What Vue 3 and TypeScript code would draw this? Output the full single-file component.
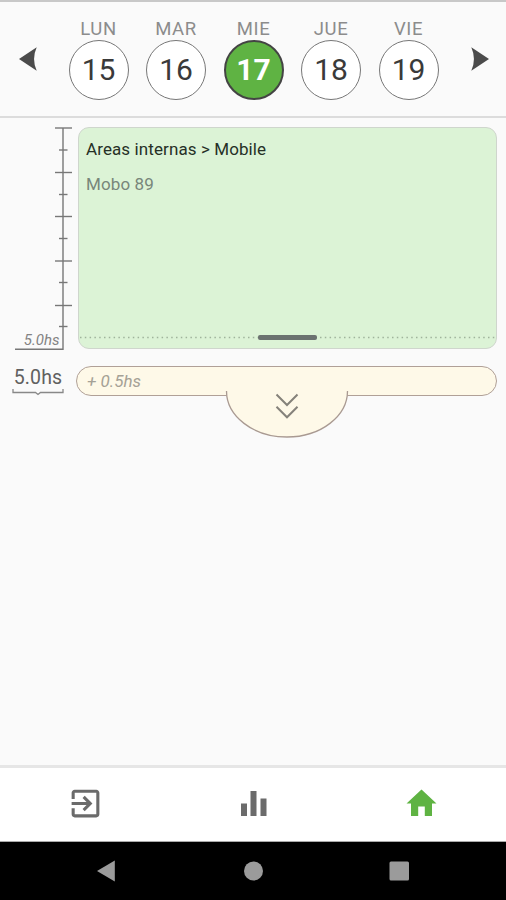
<script setup lang="ts">
import { ref } from 'vue'

interface Day {
  name: string
  date: number
}

const days: Day[] = [
  { name: 'LUN', date: 15 },
  { name: 'MAR', date: 16 },
  { name: 'MIE', date: 17 },
  { name: 'JUE', date: 18 },
  { name: 'VIE', date: 19 },
]
const selected = ref(17)
const majorTicks = [0.5, 45, 89, 133.5, 178]
const minorTicks = [22.5, 67, 111, 155, 199]
</script>

<template>
  <div class="screen">
    <header class="week">
      <button class="arrow" aria-label="Anterior">
        <svg width="20" height="26" viewBox="0 0 20 26"><path d="M1 13L18.700 1.200Q13.400 13 18.700 24.800Z" fill="#4b4b4b" /></svg>
      </button>
      <div class="days">
        <button
          v-for="day in days"
          :key="day.date"
          class="day"
          :class="{ active: day.date === selected }"
          @click="selected = day.date"
        >
          <span class="name">{{ day.name }}</span>
          <span class="date">{{ day.date }}</span>
        </button>
      </div>
      <button class="arrow" aria-label="Siguiente">
        <svg width="20" height="26" viewBox="0 0 20 26"><path d="M19 13L1.300 1.200Q6.600 13 1.300 24.800Z" fill="#4b4b4b" /></svg>
      </button>
    </header>

    <main class="content">
      <section class="entry">
        <div class="scale">
          <svg width="78" height="224" viewBox="0 0 78 224" fill="none" stroke="#777" stroke-width="1.400">
            <path d="M63 1V222.300H15" />
            <path v-for="y in majorTicks" :key="y" :d="`M55 ${y + 0.5}H72`" />
            <path v-for="y in minorTicks" :key="y" :d="`M59 ${y + 0.5}H67.500`" />
          </svg>
          <span class="scale-label">5.0hs</span>
        </div>
        <article class="card">
          <h2>Areas internas &gt; Mobile</h2>
          <p>Mobo 89</p>
          <div class="resize">
            <svg width="417" height="5" viewBox="0 0 417 5">
              <path d="M1 2.500H417" stroke="#9fb39b" stroke-width="1.500" stroke-dasharray="1.500 3.300" />
              <rect x="179" y="0" width="59" height="5" rx="2" fill="#6b7270" />
            </svg>
          </div>
        </article>
      </section>

      <section class="summary">
        <div class="total">
          <span>5.0hs</span>
          <svg width="52" height="7" viewBox="0 0 52 7" fill="none" stroke="#888" stroke-width="1.300">
            <path d="M1 0V3.500H23.500L26 5.500L28.500 3.500H51V0" />
          </svg>
        </div>
        <div class="add">
          <span>+ 0.5hs</span>
          <svg class="expand" width="124" height="48" viewBox="0 0 124 48" fill="none">
            <path d="M1.500 1C1.500 25 28 46 62 46S122.500 25 122.500 1Z" fill="#fef9e8" />
            <path d="M1.500 0C1.500 25 28 46 62 46S122.500 25 122.500 0" stroke="#a99a92" stroke-width="1.300" />
            <path d="M51.500 3.500L62 14L72.500 3.500M51.500 15.800L62 26.300L72.500 15.800" stroke="#85827a" stroke-width="2" />
          </svg>
        </div>
      </section>
    </main>

    <nav class="tabs">
      <button aria-label="Salir">
        <svg width="37" height="37" viewBox="0 0 24 24" fill="#6b6b6b">
          <path d="M10.090 15.590L11.500 17l5-5-5-5-1.410 1.410L12.670 11H3v2h9.670l-2.580 2.590zM19 3H5c-1.110 0-2 .9-2 2v4h2V5h14v14H5v-4H3v4c0 1.100.89 2 2 2h14c1.100 0 2-.9 2-2V5c0-1.100-.9-2-2-2z" />
        </svg>
      </button>
      <button aria-label="Reportes">
        <svg width="37" height="37" viewBox="0 0 37 37" fill="#6b6b6b">
          <path d="M6 18.500h6V31H6zM15.500 6h6v25h-6zM25.500 13.500h6V31h-6z" />
        </svg>
      </button>
      <button aria-label="Inicio">
        <svg width="37" height="37" viewBox="0 0 37 37" fill="#5fb343">
          <path d="M18.500 4.500L33.500 18.500H29V31H21.800V21.500H15.200V31H8V18.500H3.500Z" />
        </svg>
      </button>
    </nav>

    <footer class="system">
      <svg width="22" height="24" viewBox="0 0 22 24" fill="#9b9b9b"><path d="M1 12L18.800 1.500V22.500Z" /></svg>
      <svg width="22" height="24" viewBox="0 0 22 24" fill="#9b9b9b"><circle cx="11.500" cy="12" r="9.500" /></svg>
      <svg width="22" height="24" viewBox="0 0 22 24" fill="#9b9b9b"><rect x="1.500" y="2.500" width="19.500" height="19" rx="1.500" /></svg>
    </footer>
  </div>
</template>

<style>
body {
  margin: 0;
}
</style>

<style scoped>
.screen {
  width: 506px;
  height: 900px;
  box-sizing: border-box;
  display: flex;
  flex-direction: column;
  background: #fafafa;
  font-family: Roboto, sans-serif;
  overflow: hidden;
}
button {
  border: 0;
  padding: 0;
  margin: 0;
  background: none;
  font-family: inherit;
}
svg {
  display: block;
}
.week {
  height: 118px;
  box-sizing: border-box;
  border-top: 2px solid #c8c8c8;
  border-bottom: 2px solid #dcdcdc;
  display: flex;
  justify-content: space-between;
  padding: 0 16.5px 0 17.5px;
}
.arrow {
  align-self: flex-start;
  padding-top: 44px;
}
.days {
  display: flex;
  gap: 17.5px;
  padding-top: 17px;
}
.day {
  width: 60px;
  display: flex;
  flex-direction: column;
  align-items: center;
}
.name {
  height: 21px;
  line-height: 21px;
  font-size: 18.5px;
  letter-spacing: 0.6px;
  color: #8c8c8c;
}
.date {
  width: 60px;
  height: 60px;
  box-sizing: border-box;
  border: 1.5px solid #777;
  border-radius: 50%;
  background: #fff;
  display: flex;
  align-items: center;
  justify-content: center;
  font-size: 30px;
  line-height: 34px;
  padding-bottom: 1px;
  color: #3a3a3a;
}
.active .date {
  border: 2px solid #444;
  background: #5fb343;
  color: #fff;
  font-weight: 700;
}
.content {
  flex: 1;
  padding-top: 9px;
}
.entry {
  display: flex;
  height: 222px;
}
.scale {
  position: relative;
  width: 78px;
}
.scale-label {
  position: absolute;
  right: 18.5px;
  bottom: 0;
  font-size: 15px;
  line-height: 17px;
  font-style: italic;
  color: #838383;
}
.card {
  width: 419px;
  height: 222px;
  box-sizing: border-box;
  display: flex;
  flex-direction: column;
  border: 1.5px solid #cfd6cd;
  border-radius: 11px;
  background: #dcf3d6;
  overflow: hidden;
}
.card h2,
.card p {
  margin: 0;
  padding-left: 7px;
  font-size: 17px;
  line-height: 20px;
  font-weight: 400;
  letter-spacing: 0.1px;
}
.card h2 {
  padding-top: 11px;
  color: #263026;
}
.card p {
  padding-top: 15px;
  color: #78867a;
}
.resize {
  margin-top: auto;
  padding-bottom: 8px;
}
.summary {
  display: flex;
  padding-top: 17px;
}
.total {
  width: 64px;
  box-sizing: border-box;
  padding-left: 12px;
  display: flex;
  flex-direction: column;
  align-items: center;
  font-size: 19.5px;
  line-height: 23px;
  letter-spacing: 0.1px;
  color: #606060;
}
.add {
  position: relative;
  width: 421px;
  height: 30px;
  box-sizing: border-box;
  margin-left: 12px;
  padding-left: 10px;
  border: 1.5px solid #b0a097;
  border-radius: 15px;
  background: #fef9e8;
  font-size: 17px;
  line-height: 28px;
  font-style: italic;
  color: #a5a196;
}
.expand {
  position: absolute;
  left: 147.5px;
  top: 24px;
}
.tabs {
  height: 77px;
  box-sizing: border-box;
  border-top: 3px solid #e6e6e6;
  border-bottom: 1px solid #aaa;
  background: #fff;
  display: grid;
  grid-template-columns: repeat(3, 1fr);
  align-items: center;
  justify-items: center;
  padding: 0 0 2px 1px;
}
.system {
  height: 58px;
  background: #000;
  display: flex;
  align-items: center;
  justify-content: space-between;
  padding: 0 96px;
}
</style>
